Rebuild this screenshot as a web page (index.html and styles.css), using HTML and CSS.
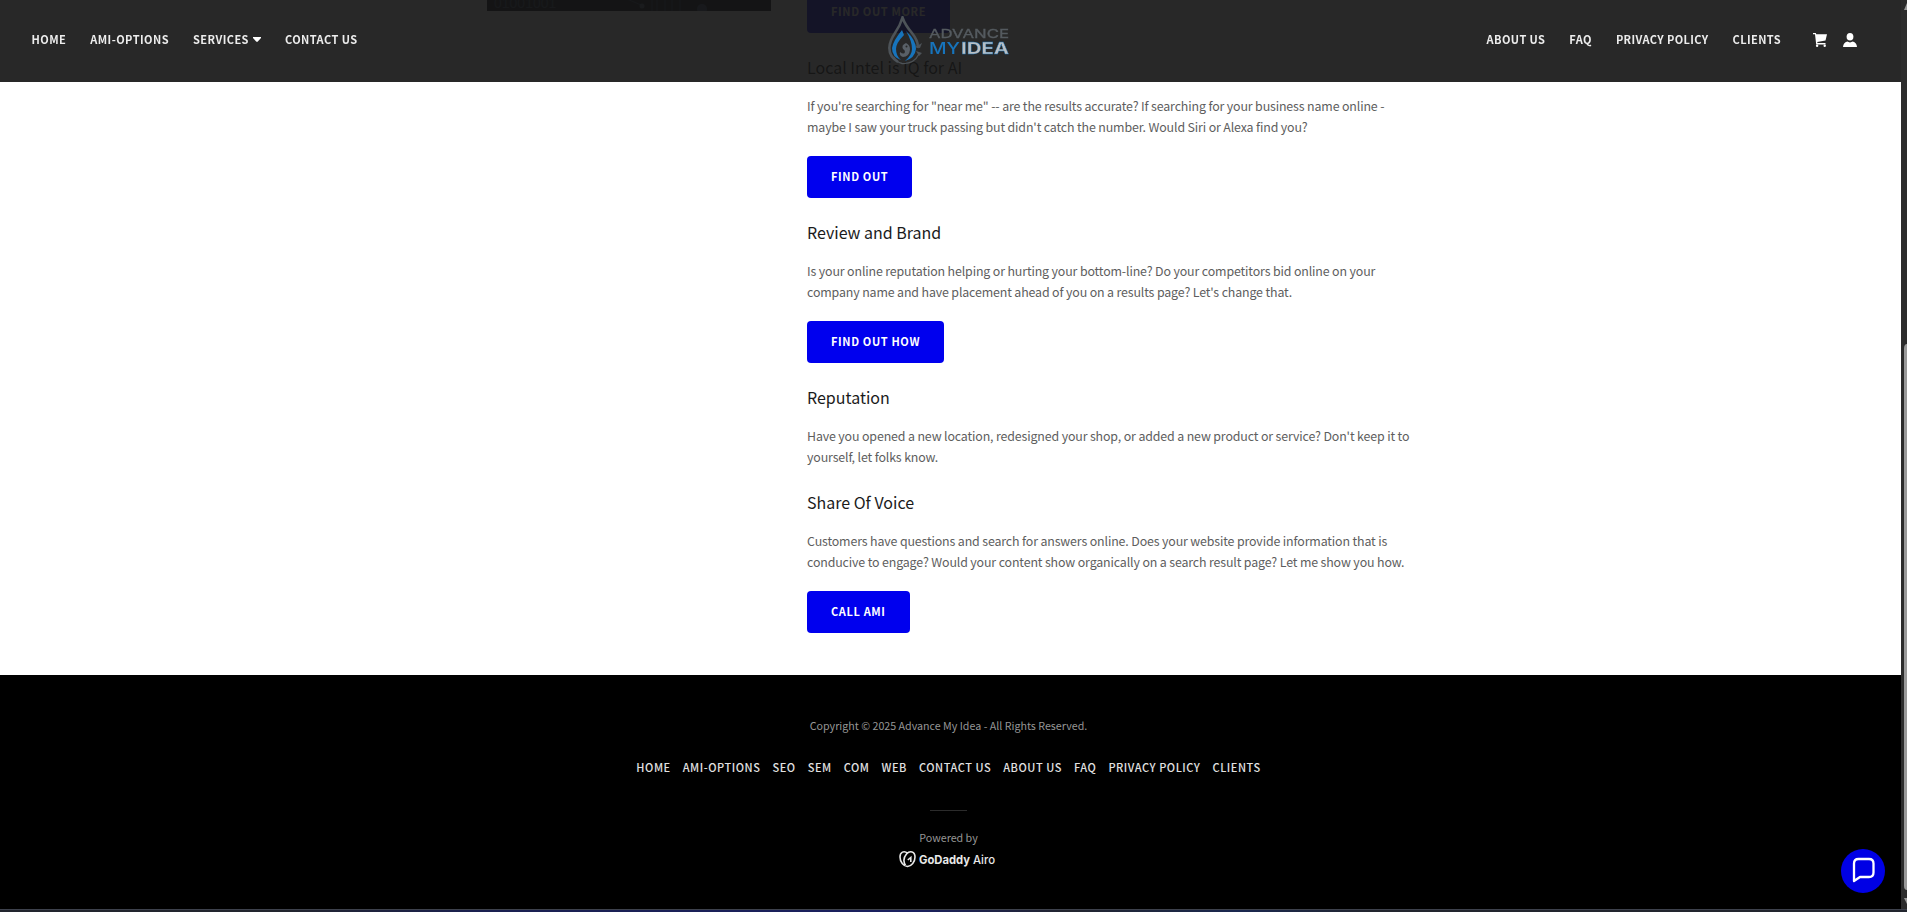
FILE: index.html
```html
<!DOCTYPE html>
<html lang="en">
<head>
<meta charset="utf-8">
<title>Advance My Idea</title>
<link rel="stylesheet" href="styles.css">
</head>
<body>
<div class="page">
  <header class="header">
    <nav class="nav">
      <a>HOME</a><a>AMI-OPTIONS</a><a class="has-menu"><span>SERVICES</span><svg class="caret" viewBox="0 0 8 5"><path d="M0 0h8v1L4.6 4.8H3.4L0 1z"/></svg></a><a>CONTACT US</a>
    </nav>
    <svg class="logo" viewBox="0 0 124 50">
      <path d="M10 46C-3 38 1 26 7 17Q12 10 14.500 1.500Q17 9 24 17Q31 26 29.500 32" fill="none" stroke="#4d5358" stroke-width="2.600"/>
      <path d="M34 27l-7 4 5 1zM34 37l-6-2 3 5z" fill="#4d5358"/>
      <path d="M31 38C28 44 22 48 14 47.500Q8 46 6 41" fill="none" stroke="#4d5358" stroke-width="1.300"/>
      <path d="M14 14L16 19Q8 27 8 33Q8 40 13 44Q4 41 4 32Q5 25 14 14Z" fill="#1774bc"/>
      <path d="M18 15Q28 24 28 33Q27 42 17 45Q24 39 24 33Q24 25 18 15Z" fill="#1774bc"/>
      <path d="M18 27A6.500 7 0 0 1 22 34Q21 41 15 41Q11 40 12 36Q16 39 17 36Q17 34 15 33Q13 29 18 27Z" fill="#596067"/>
      <circle cx="18.500" cy="30.500" r="1" fill="#282828"/>
      <text class="logo-top" x="41" y="22" textLength="80" lengthAdjust="spacingAndGlyphs">ADVANCE</text>
      <text class="logo-my" x="41" y="38" textLength="31" lengthAdjust="spacingAndGlyphs">MY</text>
      <text class="logo-idea" x="73" y="38" textLength="48" lengthAdjust="spacingAndGlyphs">IDEA</text>
    </svg>
    <nav class="nav nav-right">
      <a>ABOUT US</a><a>FAQ</a><a>PRIVACY POLICY</a><a>CLIENTS</a>
      <svg class="icon cart" viewBox="0 0 14 14"><path d="M0 0h2.8l.5 1.3H14L12.5 7.6 4.2 9l.3 1.1H12.500v1.3H3.200L2 1.300H0z"/><circle cx="4.100" cy="12.800" r="1.200"/><circle cx="11.700" cy="12.800" r="1.200"/></svg>
      <svg class="icon user" viewBox="0 0 14 14"><ellipse cx="7" cy="3.800" rx="3.400" ry="3.800"/><path d="M0 14Q.3 9.800 4.200 8.600Q7 10.200 9.800 8.600Q13.700 9.800 14 14z"/></svg>
    </nav>
  </header>
  <main class="main">
    <svg class="photo" viewBox="0 0 284 20">
      <rect width="284" height="20" fill="#050a14"/>
      <g fill="#31435c" class="digits"><text x="7" y="17">01001001</text></g>
      <path d="M165 9v11M170 9v11M178 9v11M185 9v11M193 9v11M140 8l14 6" stroke="#263952" fill="none"/>
      <circle cx="155" cy="15" r="2.500" fill="#4b5c75"/><circle cx="215" cy="18" r="5" fill="#32496a"/>
    </svg>
    <div class="content">
      <a class="btn">FIND OUT MORE</a>
      <h4>Local Intel is IQ for AI</h4>
      <p>If you're searching for "near me" -- are the results accurate? If searching for your business name online -<br>maybe I saw your truck passing but didn't catch the number. Would Siri or Alexa find you?</p>
      <a class="btn">FIND OUT</a>
      <h4>Review and Brand</h4>
      <p>Is your online reputation helping or hurting your bottom-line? Do your competitors bid online on your<br>company name and have placement ahead of you on a results page? Let's change that.</p>
      <a class="btn">FIND OUT HOW</a>
      <h4>Reputation</h4>
      <p>Have you opened a new location, redesigned your shop, or added a new product or service? Don't keep it to<br>yourself, let folks know.</p>
      <h4>Share Of Voice</h4>
      <p>Customers have questions and search for answers online. Does your website provide information that is<br>conducive to engage? Would your content show organically on a search result page? Let me show you how.</p>
      <a class="btn">CALL AMI</a>
    </div>
  </main>
  <footer class="footer">
    <div class="copyright">Copyright © 2025 Advance My Idea - All Rights Reserved.</div>
    <nav class="footer-nav"><a>HOME</a><a>AMI-OPTIONS</a><a>SEO</a><a>SEM</a><a>COM</a><a>WEB</a><a>CONTACT US</a><a>ABOUT US</a><a>FAQ</a><a>PRIVACY POLICY</a><a>CLIENTS</a></nav>
    <div class="divider"></div>
    <div class="powered">Powered by</div>
    <svg class="godaddy" viewBox="0 0 97 18">
      <g fill="none" stroke="#e8e8e8" stroke-width="1.600"><path d="M8.500 3.200C5 .200 1 2 1 7C1 12 4.500 16 8.500 16.500C12.500 16 16 12 16 7C16 1.500 11 .200 7.500 4C4.500 7.500 4.500 12 6.500 15.200"/><path d="M8.800 10l3-2.500v4.500"/></g>
      <text class="gd" x="20" y="14" textLength="51" lengthAdjust="spacingAndGlyphs">GoDaddy</text>
      <text class="airo" x="74" y="14" textLength="22" lengthAdjust="spacingAndGlyphs">Airo</text>
    </svg>
  </footer>
</div>
<div class="scrollbar"><svg viewBox="0 0 6 909"><path d="M6 3v7H3z" fill="#9a9a9a"/><path d="M6 344q-3 0-3 5v537q0 4 3 4z" fill="#9a9a9a"/><path d="M3 898h3v6z" fill="#9a9a9a"/></svg></div>
<div class="bottom-edge"></div>
<div class="chat"><svg viewBox="0 0 44 44"><path d="M13 32V14.500Q13 10 17.500 10H28Q32.500 10 32.500 14.500V23.500Q32.500 28 28 28H19z" fill="none" stroke="#fff" stroke-width="2.300" stroke-linejoin="round"/></svg></div>
</body>
</html>
```
FILE: styles.css
```css
* { box-sizing: border-box; }
body { margin: 0; height: 912px; overflow: hidden; background: #fff; font-family: "Noto Sans CJK SC", "Noto Sans", sans-serif; }
.page { width: 1901px; height: 909px; overflow: hidden; }
.header { position: fixed; z-index: 2; top: 0; left: 0; width: 1901px; height: 82px; padding: 0 44px 2px 31px; display: grid; grid-template-columns: 1fr 124px 1fr; align-items: center; background: rgba(22, 22, 22, .92); }
.nav { display: flex; align-items: center; gap: 24px; color: #ededed; font-size: 11px; font-weight: 700; line-height: 18px; letter-spacing: .45px; white-space: nowrap; }
.nav > a { padding-bottom: 2px; }
.nav:first-child { padding-left: .5px; }
.nav-right { justify-content: flex-end; letter-spacing: .4px; }
.has-menu { display: flex; align-items: center; gap: 4px; }
.caret { width: 8px; height: 5px; fill: #fff; }
.icon { width: 14px; height: 14px; fill: #fff; }
.cart { margin-left: 8px; }
.user { margin-left: -8px; }
.logo { width: 124px; height: 50px; margin: 2px -6px 0 6px; }
.logo-top { font: 400 12px Inter, sans-serif; fill: #555b60; stroke: #555b60; stroke-width: .3px; }
.logo-my { font: 500 16px Inter, sans-serif; fill: #1774bc; }
.logo-idea { font: 700 16px Inter, sans-serif; fill: #b9bfc4; stroke: #1774bc; stroke-width: .3px; }
.main { display: flex; align-items: flex-start; gap: 36px; margin-top: -9px; padding: 0 0 42px 487px; }
.photo { width: 284px; height: 20px; }
.digits { font: 14px "Liberation Sans", sans-serif; }
.content { display: flex; flex-direction: column; align-items: flex-start; }
.btn { height: 42px; padding: 0 24px; border-radius: 4px; background: #0000ee; color: #fff; font-size: 11px; font-weight: 700; line-height: 40px; letter-spacing: .63px; }
h4 { margin: 22px 0 17px; color: #1b1b1b; font-size: 16px; font-weight: 400; line-height: 24px; }
p { margin: 0; color: #5e5e5e; font-size: 12.4px; line-height: 21px; letter-spacing: -.14px; white-space: nowrap; }
p + .btn { margin-top: 18px; }
.footer { height: 234px; padding: 42px 4px 0 0; background: #000; display: flex; flex-direction: column; align-items: center; color: #969696; }
.copyright, .powered { font-size: 10.7px; line-height: 18px; }
.footer-nav { display: flex; gap: 12px; margin-top: 23px; color: #e2e2e2; font-size: 11px; line-height: 18px; font-weight: 500; letter-spacing: .55px; }
.divider { width: 37px; height: 1px; margin-top: 34px; background: #2b2b2b; }
.powered { margin-top: 18px; }
.godaddy { width: 97px; height: 18px; margin: 3px 2px 0 0; }
.gd { font: 700 12px Inter, sans-serif; fill: #e8e8e8; }
.airo { font: 500 12px Inter, sans-serif; fill: #e8e8e8; }
.scrollbar { position: fixed; right: 0; top: 0; width: 6px; height: 909px; background: #2c2c2c; }
.scrollbar svg { display: block; width: 6px; height: 909px; }
.bottom-edge { position: fixed; left: 0; bottom: 0; width: 100%; height: 3px; background: linear-gradient(90deg, #22252e 15%, #1a2050 25%, #1a2060 48%, #22252e 56%, #1a2850 65%, #22252e 72%); border-top: 1px solid #3d414c; }
.chat { position: fixed; left: 1841px; top: 849px; width: 44px; height: 44px; border-radius: 50%; background: #0000e5; }
.chat svg { display: block; }
```
